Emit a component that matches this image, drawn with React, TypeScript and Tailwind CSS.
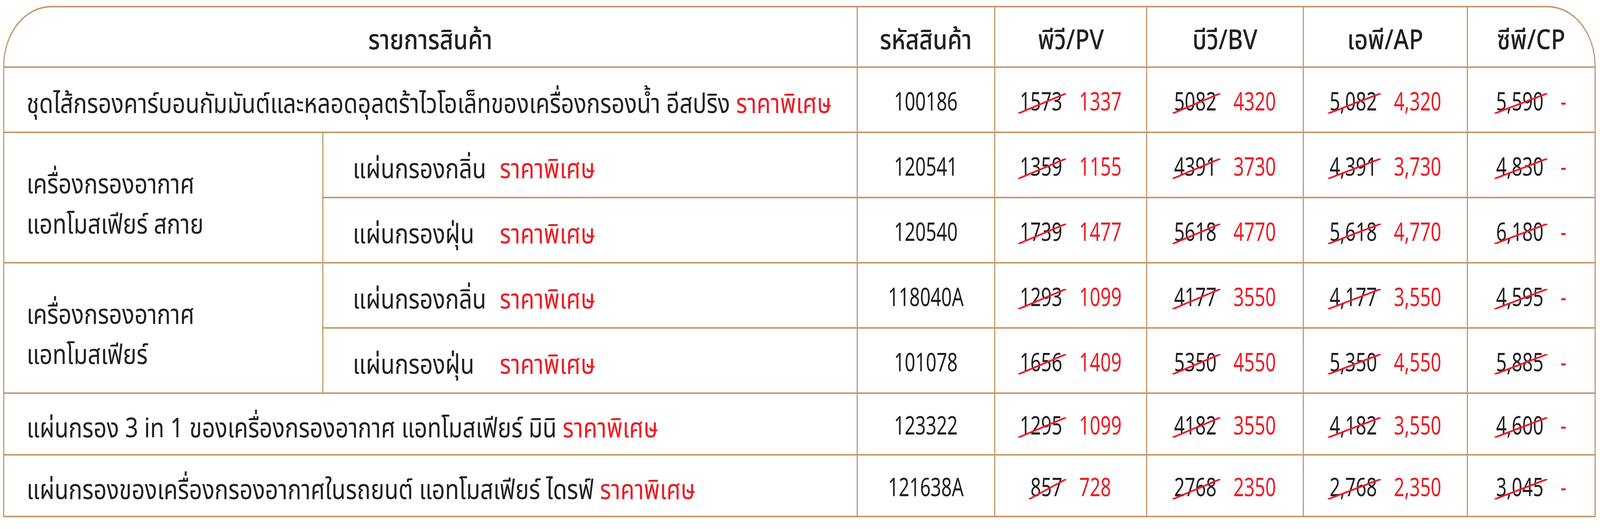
import type { ReactNode } from "react";

type Pair = [string, string];

type Item = {
  code: string;
  pv: Pair;
  bv: Pair;
  ap: Pair;
  cp: Pair;
};

type SingleRow = Item & { kind: "single"; name: string; h: string };
type GroupRow = {
  kind: "group";
  lines: [string, string];
  subs: (Item & { name: string })[];
};

const rows: (SingleRow | GroupRow)[] = [
  {
    kind: "single",
    name: "ชุดไส้กรองคาร์บอนกัมมันต์และหลอดอุลตร้าไวโอเล็ทของเครื่องกรองน้ำ อีสปริง",
    code: "100186",
    pv: ["1573", "1337"],
    bv: ["5082", "4320"],
    ap: ["5,082", "4,320"],
    cp: ["5,590", "-"],
    h: "h-[163px]",
  },
  {
    kind: "group",
    lines: ["เครื่องกรองอากาศ", "แอทโมสเฟียร์ สกาย"],
    subs: [
      {
        name: "แผ่นกรองกลิ่น",
        code: "120541",
        pv: ["1359", "1155"],
        bv: ["4391", "3730"],
        ap: ["4,391", "3,730"],
        cp: ["4,830", "-"],
      },
      {
        name: "แผ่นกรองฝุ่น",
        code: "120540",
        pv: ["1739", "1477"],
        bv: ["5618", "4770"],
        ap: ["5,618", "4,770"],
        cp: ["6,180", "-"],
      },
    ],
  },
  {
    kind: "group",
    lines: ["เครื่องกรองอากาศ", "แอทโมสเฟียร์"],
    subs: [
      {
        name: "แผ่นกรองกลิ่น",
        code: "118040A",
        pv: ["1293", "1099"],
        bv: ["4177", "3550"],
        ap: ["4,177", "3,550"],
        cp: ["4,595", "-"],
      },
      {
        name: "แผ่นกรองฝุ่น",
        code: "101078",
        pv: ["1656", "1409"],
        bv: ["5350", "4550"],
        ap: ["5,350", "4,550"],
        cp: ["5,885", "-"],
      },
    ],
  },
  {
    kind: "single",
    name: "แผ่นกรอง 3 in 1 ของเครื่องกรองอากาศ แอทโมสเฟียร์ มินิ",
    code: "123322",
    pv: ["1295", "1099"],
    bv: ["4182", "3550"],
    ap: ["4,182", "3,550"],
    cp: ["4,600", "-"],
    h: "h-[154px]",
  },
  {
    kind: "single",
    name: "แผ่นกรองของเครื่องกรองอากาศในรถยนต์ แอทโมสเฟียร์ ไดรฟ์",
    code: "121638A",
    pv: ["857", "728"],
    bv: ["2768", "2350"],
    ap: ["2,768", "2,350"],
    cp: ["3,045", "-"],
    h: "h-[154px]",
  },
];

const Special = () => <span className="text-[#ed1c24]">ราคาพิเศษ</span>;

function Cell({ children, className = "" }: { children: ReactNode; className?: string }) {
  return <div className={`flex items-center bg-white ${className}`}>{children}</div>;
}

// header label, a little narrower like the condensed face in the print
function Head({ children, className = "" }: { children: ReactNode; className?: string }) {
  return (
    <Cell className={`justify-center pt-[22px] ${className}`}>
      <span className="scale-x-[0.86] whitespace-nowrap text-[70px] font-medium">{children}</span>
    </Cell>
  );
}

function Struck({ value }: { value: string }) {
  return (
    <span className="relative inline-block leading-none">
      {value}
      <svg
        className="pointer-events-none absolute -left-[6px] top-[9px] h-[calc(100%-14px)] w-[calc(100%+20px)]"
        viewBox="0 0 100 100"
        preserveAspectRatio="none"
      >
        <line x1="0" y1="100" x2="100" y2="0" stroke="#ed1c24" strokeWidth="4.5" vectorEffect="non-scaling-stroke" />
      </svg>
    </span>
  );
}

function Price({ pair }: { pair: Pair }) {
  return (
    <Cell className="justify-center pt-[14px]">
      <div className="flex scale-x-[0.72] items-center gap-[60px] whitespace-nowrap text-[66px]">
        <Struck value={pair[0]} />
        <span className="leading-none text-[#ed1c24]">{pair[1]}</span>
      </div>
    </Cell>
  );
}

function ItemCells({ item }: { item: Item }) {
  return (
    <>
      <Cell className="justify-center pt-[14px]">
        <span className="scale-x-[0.72] text-[66px] leading-none">{item.code}</span>
      </Cell>
      <Price pair={item.pv} />
      <Price pair={item.bv} />
      <Price pair={item.ap} />
      <Price pair={item.cp} />
    </>
  );
}

export default function App() {
  return (
    <div className="h-[1355px] bg-white pl-[8px] pt-[15px] font-['Noto_Sans_Thai','Noto_Sans',sans-serif] text-[#231f20]">
      <div className="grid w-[4077px] grid-cols-[814px_1365px_349px_386px_398px_417px_324px] gap-x-[3px] gap-y-[4px] rounded-tl-[123px_154px] rounded-tr-[123px_154px] bg-[#c49a6c] px-[3px] py-[4px]">
        {/* header */}
        <Head className="col-span-2 h-[151px] rounded-tl-[120px_150px]">รายการสินค้า</Head>
        <Head>รหัสสินค้า</Head>
        <Head>พีวี/PV</Head>
        <Head>บีวี/BV</Head>
        <Head>เอพี/AP</Head>
        <Head className="rounded-tr-[120px_150px]">ซีพี/CP</Head>

        {rows.map((r, i) =>
          r.kind === "single" ? (
            <div key={i} className="contents">
              <Cell className={`col-span-2 ${r.h} pl-[57px] pt-[26px]`}>
                <span className="origin-left scale-x-[0.84] whitespace-nowrap text-[70px]">
                  {r.name} <Special />
                </span>
              </Cell>
              <ItemCells item={r} />
            </div>
          ) : (
            <div key={i} className="contents">
              <Cell className="row-span-2 pl-[57px] pt-[40px]">
                <div className="flex origin-left scale-x-[0.84] flex-col whitespace-nowrap text-[70px] leading-[103px]">
                  <span>{r.lines[0]}</span>
                  <span>{r.lines[1]}</span>
                </div>
              </Cell>
              {r.subs.map((s, j) => (
                <div key={j} className="contents">
                  <Cell className="h-[163px] pl-[75px] pt-[26px]">
                    <div className="flex origin-left scale-x-[0.84] whitespace-nowrap text-[70px]">
                      <span className="w-[448px] shrink-0">{s.name}</span>
                      <Special />
                    </div>
                  </Cell>
                  <ItemCells item={s} />
                </div>
              ))}
            </div>
          )
        )}
      </div>
    </div>
  );
}
